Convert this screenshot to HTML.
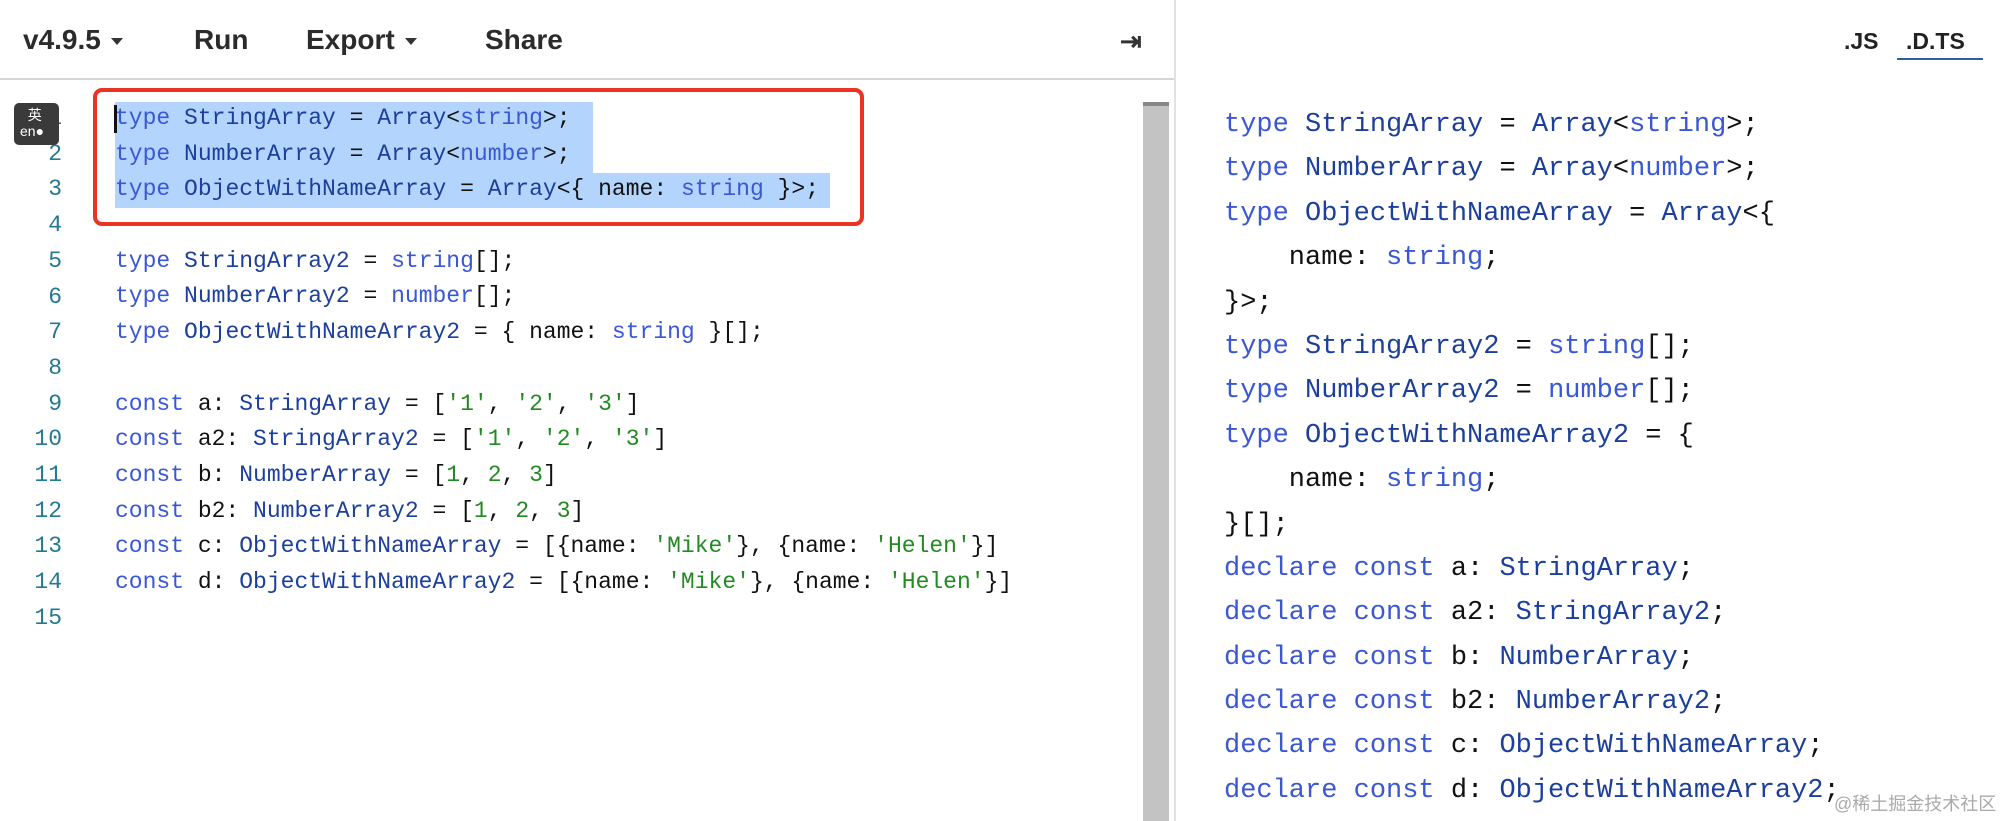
<!DOCTYPE html>
<html><head><meta charset="utf-8"><style>
*{margin:0;padding:0;box-sizing:border-box}
body{width:2000px;height:821px;background:#fff;position:relative;overflow:hidden;font-family:"Liberation Sans",sans-serif}
.top{position:absolute;left:0;top:0;width:1174px;height:80px;border-bottom:2px solid #d6d6d6}
.nav{position:absolute;top:24px;font-size:28px;font-weight:bold;color:#2b2b2b}
.car{display:inline-block;width:0;height:0;border-left:6px solid transparent;border-right:6px solid transparent;border-top:7px solid #333;vertical-align:middle;margin-left:10px}
.div{position:absolute;left:1174px;top:0;width:2px;height:821px;background:#e2e2e2}
.sb{position:absolute;left:1143px;top:102px;width:26px;height:719px;background:#c3c3c3;border-top:4px solid #888}
.code{position:absolute;font-family:"Liberation Mono","DejaVu Sans Mono",monospace;color:#111}
.r{white-space:pre}
.l .r{height:35.7px;line-height:35.7px;font-size:23px}
.ln{position:absolute;left:0;width:62px;text-align:right;color:#237893;font-family:"Liberation Mono",monospace;font-size:23px}
.R .r{height:44.4px;line-height:44.4px;font-size:27px}
.k{color:#3a57d4}.t{color:#1c3f9c}.s{color:#238a23}.n{color:#238a23}
.sel{position:absolute;background:#b3d4fc}
</style></head><body>
<div class="top"></div>
<div class="nav" style="left:23px">v4.9.5<span class="car"></span></div>
<div class="nav" style="left:194px">Run</div>
<div class="nav" style="left:306px">Export<span class="car"></span></div>
<div class="nav" style="left:485px">Share</div>
<div style="position:absolute;left:1120px;top:26px;font-size:26px;color:#333;font-weight:bold">⇥</div>
<div class="div"></div>
<div class="sb"></div>
<div style="position:absolute;left:1844px;top:28px;font-size:23px;font-weight:bold;color:#222">.JS</div>
<div style="position:absolute;left:1906px;top:28px;font-size:23px;font-weight:bold;color:#222">.D.TS</div>
<div style="position:absolute;left:1897px;top:58px;width:86px;height:2px;background:#2f5f9e"></div>

<div class="sel" style="left:115px;top:102px;width:478px;height:36px"></div>
<div class="sel" style="left:115px;top:137px;width:478px;height:36px"></div>
<div class="sel" style="left:115px;top:173px;width:715px;height:35px"></div>
<div style="position:absolute;left:114px;top:105px;width:3px;height:28px;background:#111"></div>
<div style="position:absolute;left:93px;top:88px;width:771px;height:138px;border:4px solid #ea3323;border-radius:9px"></div>

<div class="ln" style="top:101px;line-height:35.7px">1<br>2<br>3<br>4<br>5<br>6<br>7<br>8<br>9<br>10<br>11<br>12<br>13<br>14<br>15</div>
<div style="position:absolute;left:14px;top:103px;width:45px;height:42px;background:#3a3a3a;border-radius:5px;color:#fff;font-size:14px;line-height:16px;padding:4px 0 0 6px">&nbsp;&nbsp;英<br>en●</div>

<div class="code l" style="left:115px;top:101px"><div class="r"><span class="k">type</span> <span class="t">StringArray</span> = <span class="t">Array</span>&lt;<span class="k">string</span>&gt;;</div><div class="r"><span class="k">type</span> <span class="t">NumberArray</span> = <span class="t">Array</span>&lt;<span class="k">number</span>&gt;;</div><div class="r"><span class="k">type</span> <span class="t">ObjectWithNameArray</span> = <span class="t">Array</span>&lt;{ name: <span class="k">string</span> }&gt;;</div><div class="r"> </div><div class="r"><span class="k">type</span> <span class="t">StringArray2</span> = <span class="k">string</span>[];</div><div class="r"><span class="k">type</span> <span class="t">NumberArray2</span> = <span class="k">number</span>[];</div><div class="r"><span class="k">type</span> <span class="t">ObjectWithNameArray2</span> = { name: <span class="k">string</span> }[];</div><div class="r"> </div><div class="r"><span class="k">const</span> a: <span class="t">StringArray</span> = [<span class="s">'1'</span>, <span class="s">'2'</span>, <span class="s">'3'</span>]</div><div class="r"><span class="k">const</span> a2: <span class="t">StringArray2</span> = [<span class="s">'1'</span>, <span class="s">'2'</span>, <span class="s">'3'</span>]</div><div class="r"><span class="k">const</span> b: <span class="t">NumberArray</span> = [<span class="n">1</span>, <span class="n">2</span>, <span class="n">3</span>]</div><div class="r"><span class="k">const</span> b2: <span class="t">NumberArray2</span> = [<span class="n">1</span>, <span class="n">2</span>, <span class="n">3</span>]</div><div class="r"><span class="k">const</span> c: <span class="t">ObjectWithNameArray</span> = [{name: <span class="s">'Mike'</span>}, {name: <span class="s">'Helen'</span>}]</div><div class="r"><span class="k">const</span> d: <span class="t">ObjectWithNameArray2</span> = [{name: <span class="s">'Mike'</span>}, {name: <span class="s">'Helen'</span>}]</div></div>

<div class="code R" style="left:1224px;top:103px"><div class="r"><span class="k">type</span> <span class="t">StringArray</span> = <span class="t">Array</span>&lt;<span class="k">string</span>&gt;;</div><div class="r"><span class="k">type</span> <span class="t">NumberArray</span> = <span class="t">Array</span>&lt;<span class="k">number</span>&gt;;</div><div class="r"><span class="k">type</span> <span class="t">ObjectWithNameArray</span> = <span class="t">Array</span>&lt;{</div><div class="r">    name: <span class="k">string</span>;</div><div class="r">}&gt;;</div><div class="r"><span class="k">type</span> <span class="t">StringArray2</span> = <span class="k">string</span>[];</div><div class="r"><span class="k">type</span> <span class="t">NumberArray2</span> = <span class="k">number</span>[];</div><div class="r"><span class="k">type</span> <span class="t">ObjectWithNameArray2</span> = {</div><div class="r">    name: <span class="k">string</span>;</div><div class="r">}[];</div><div class="r"><span class="k">declare</span> <span class="k">const</span> a: <span class="t">StringArray</span>;</div><div class="r"><span class="k">declare</span> <span class="k">const</span> a2: <span class="t">StringArray2</span>;</div><div class="r"><span class="k">declare</span> <span class="k">const</span> b: <span class="t">NumberArray</span>;</div><div class="r"><span class="k">declare</span> <span class="k">const</span> b2: <span class="t">NumberArray2</span>;</div><div class="r"><span class="k">declare</span> <span class="k">const</span> c: <span class="t">ObjectWithNameArray</span>;</div><div class="r"><span class="k">declare</span> <span class="k">const</span> d: <span class="t">ObjectWithNameArray2</span>;</div></div>
<div style="position:absolute;left:1834px;top:790px;font-size:18px;color:#aaa;font-family:'Liberation Sans','Noto Sans CJK SC',sans-serif">@稀土掘金技术社区</div>
</body></html>
